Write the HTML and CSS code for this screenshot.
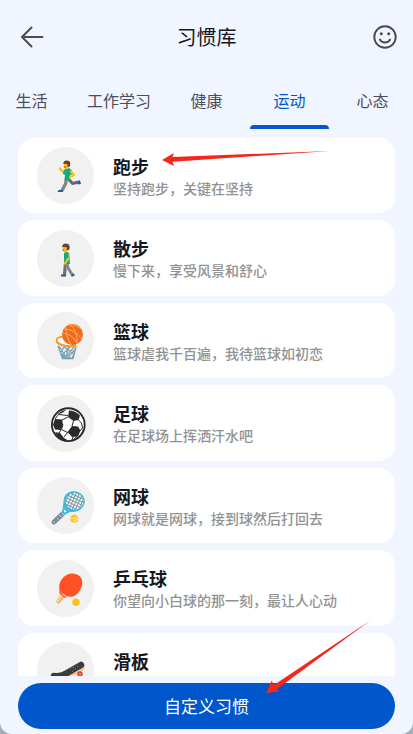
FILE: index.html
```html
<!DOCTYPE html>
<html lang="zh-CN">
<head>
<meta charset="utf-8">
<meta name="viewport" content="width=device-width, initial-scale=1">
<title>习惯库</title>
<link rel="stylesheet" href="styles.css">
</head>
<body>
<div class="app">
  <header class="topbar">
    <button class="icon-button icon-button-back" type="button" aria-label="返回">
      <svg width="24" height="24" viewBox="0 0 24 24" fill="none" stroke="#4d4d4d" stroke-width="2" stroke-linecap="round" stroke-linejoin="round"><path d="M22.500 12H2M11.500 2.500L2 12l9.500 9.500"/></svg>
    </button>
    <h1 class="title">习惯库</h1>
    <button class="icon-button" type="button" aria-label="表情">
      <svg width="24" height="24" viewBox="0 0 24 24"><circle cx="12" cy="12" r="10.700" fill="none" stroke="#4a4a4a" stroke-width="1.900"/><circle cx="8.300" cy="8.800" r="1.500" fill="#4a4a4a"/><circle cx="15.700" cy="8.800" r="1.500" fill="#4a4a4a"/><path d="M6.900 14.500c2 4 8.200 4 10.200 0" fill="none" stroke="#4a4a4a" stroke-width="1.800" stroke-linecap="round"/></svg>
    </button>
  </header>

  <nav class="tabs">
    <a class="tab" href="#life">生活</a>
    <a class="tab" href="#work">工作学习</a>
    <a class="tab" href="#health">健康</a>
    <a class="tab tab-active" href="#sport" aria-current="page">运动</a>
    <a class="tab" href="#mind">心态</a>
  </nav>

  <main class="content">
    <ul class="habits">
      <li class="habit">
        <svg class="avatar" viewBox="0 0 57 57" aria-hidden="true">
          <path d="M27 25l-3-2-1-1.500" fill="none" stroke="#fbc11c" stroke-width="2.400" stroke-linecap="round" stroke-linejoin="round"/>
          <path d="M31.500 32l4 4.500 6-1.500" fill="none" stroke="#686868" stroke-width="3" stroke-linejoin="round"/>
          <path d="M29.500 31.500l-1 5.500-3.500 6.500" fill="none" stroke="#858585" stroke-width="3.400" stroke-linejoin="round"/>
          <path d="M41 34.500l1.800-1.500 1.200 4-3.500.500zM21.500 43h4.500v2h-5.500z" fill="#2b55a5"/>
          <path d="M27.500 22.500q4-3 7 .5l1.500 4-3 1-.5 5.500-5-.5.500-5-2.500-1.500z" fill="#11aa82"/>
          <path d="M34 24.500l3 3.500-4 2" fill="none" stroke="#fbc11c" stroke-width="2.300" stroke-linecap="round" stroke-linejoin="round"/>
          <ellipse cx="29.500" cy="18.500" rx="2.900" ry="3.700" fill="#fbc11c"/>
          <path d="M26.200 16q1-3 5-2.300 3.300.8 1.500 5.800l-2.200.5v-3l-4.300-.2z" fill="#6b4030"/>
          <path d="M27 20h2" stroke="#6b4030" stroke-width=".8"/>
        </svg>
        <div class="habit-text"><h2 class="habit-name">跑步</h2><p class="habit-note">坚持跑步，关键在坚持</p></div>
        <svg class="pointer pointer-card" width="168" height="16" viewBox="0 0 168 16" aria-hidden="true"><path d="M0 9L12 2l-1.500 4L168 0 10.500 10.700 12 15z" fill="#f5261b"/></svg>
      </li>
      <li class="habit">
        <svg class="avatar" viewBox="0 0 57 57" aria-hidden="true">
          <path d="M28.500 33l-1 12" fill="none" stroke="#737373" stroke-width="3.200"/>
          <path d="M30 33l1 5 4.500 7" fill="none" stroke="#858585" stroke-width="3"/>
          <path d="M24 44.500h5v2h-5zM33.500 46l3-2.500 1.500 1.500-2.500 1.800z" fill="#2b55a5"/>
          <path d="M27 23q3-2 5.200.5l.8 10.500h-6z" fill="#11aa82"/>
          <path d="M30.500 25l.5 4-3 4.500" fill="none" stroke="#fbc11c" stroke-width="2.200" stroke-linecap="round"/>
          <path d="M29.500 24.500l.7 3.500" stroke="#11aa82" stroke-width="3"/>
          <ellipse cx="28.500" cy="18.500" rx="3" ry="3.700" fill="#fbc11c"/>
          <path d="M25.200 16q1-3 5-2.300 3.500.8 2 6l-2.500.5v-3l-4.500-.2z" fill="#6b4030"/>
          <path d="M25.500 20h2" stroke="#6b4030" stroke-width=".8"/>
        </svg>
        <div class="habit-text"><h2 class="habit-name">散步</h2><p class="habit-note">慢下来，享受风景和舒心</p></div>
      </li>
      <li class="habit">
        <svg class="avatar" viewBox="0 0 57 57" aria-hidden="true">
          <ellipse cx="29" cy="29.500" rx="9.500" ry="4.500" transform="rotate(10 29 29.500)" fill="#fafafa" stroke="#f79a30" stroke-width="1.800"/>
          <circle cx="35.500" cy="22.500" r="10.500" fill="#ed6b23"/>
          <path d="M27 17q10 0 18 10M33 12.500q8 7 7 19M26 21q9 1 14 10M31 13q8-1 14 5M28.500 15q0 8 5 17" fill="none" stroke="#ffad48" stroke-width="1"/>
          <path d="M19.500 30q5 5 20 4" fill="none" stroke="#f79a30" stroke-width="2"/>
          <path d="M21 34l4.500 12.500H36L39 35M22 34l8 12.500L38.500 37M27 35l-3.500 6 6 5.500 1-11M33 35l-8 8 2 3.500M37 35l-6.500 8 3.500 3.500M27 35l10 7-2 4" fill="none" stroke="#78a3b3" stroke-width="1.300"/>
        </svg>
        <div class="habit-text"><h2 class="habit-name">篮球</h2><p class="habit-note">篮球虐我千百遍，我待篮球如初恋</p></div>
      </li>
      <li class="habit">
        <svg class="avatar" viewBox="0 0 57 57" aria-hidden="true">
          <circle cx="31.300" cy="29.700" r="16.400" fill="#fff" stroke="#2b2b2b" stroke-width="1.900"/>
          <path d="M32 15.500q6 0 11 5l-1.500 4.500-5 1-5.500-4zM35 31l6 .5 2.500 4-2.500 6-6 .5-4.500-5zM18 24l7 .5 1 5-2 5.500-6-.5-2-5zM18 37l5 1 4 5 5 3q-10 0-14-9zM20 20q4-4.500 9-5l-3 2.500zM46.500 33l-1 5-2.500 3z" fill="#2b2b2b"/>
          <path d="M18 24l3.500-4.500L31 20.500M25 25l6-3M26 29.500l-1.500 5 6 3M36.500 26L35 31M41.500 25l3 3 1 5-2.500 3M24 35l-2 3M31 37l-4 5M36 42l-1 3M40 41.500l-4 3.500" fill="none" stroke="#2b2b2b" stroke-width="1"/>
        </svg>
        <div class="habit-text"><h2 class="habit-name">足球</h2><p class="habit-note">在足球场上挥洒汗水吧</p></div>
      </li>
      <li class="habit">
        <svg class="avatar" viewBox="0 0 57 57" aria-hidden="true">
          <defs><pattern id="strings" width="3" height="3" patternUnits="userSpaceOnUse" patternTransform="rotate(25)"><rect width="3" height="3" fill="#f7fafa"/><path d="M0 0h3M0 0v3" stroke="#7898a2" stroke-width="1.900"/></pattern></defs>
          <path d="M25.500 37L17 45" stroke="#78909c" stroke-width="5" stroke-linecap="round"/>
          <path d="M25 35l1.500 3M22.500 38l2 2M20 41l1.500 1.500M16.500 44.500l1 1" stroke="#dce6e9" stroke-width="1"/>
          <path d="M25 35.500L27 21C29 14 37 12.500 43 16c6 4 6 11 2 15-3 4-8 4-12 4l-5.500 3z" fill="#41b9e3"/>
          <path d="M28.500 25c0-6 6-11 12-8.500 8 3 7 12 2 15-4 2.500-13 1-14-6.500z" fill="url(#strings)"/>
          <path d="M27 32.500l3 2-3 1z" fill="#edf5f7"/>
          <circle cx="37.300" cy="41.700" r="4" fill="#fcc422"/><path d="M33.500 41q3 1.500 7-1M36 45q1-2 5-2.500" stroke="#fff0ae" fill="none"/>
        </svg>
        <div class="habit-text"><h2 class="habit-name">网球</h2><p class="habit-note">网球就是网球，接到球然后打回去</p></div>
      </li>
      <li class="habit">
        <svg class="avatar" viewBox="0 0 57 57" aria-hidden="true">
          <path d="M24 33l4 4-6.500 7-3-2z" fill="#f2b66d"/><path d="M24.500 35l-5 7.500" stroke="#ffdca8" stroke-width="1.500"/>
          <path d="M23 32c-2-7 0-12 5-16 5-4 12-3 15.500 1 3 4 2 10-1 14-3 5-8 7-13 5z" fill="#ff5126"/>
          <path d="M22.500 31q3 5 8 6l-3 .5-5-4z" fill="#e9442a"/>
          <circle cx="39" cy="42.300" r="3.700" fill="#f9c21c"/>
        </svg>
        <div class="habit-text"><h2 class="habit-name">乒乓球</h2><p class="habit-note">你望向小白球的那一刻，最让人心动</p></div>
      </li>
      <li class="habit">
        <svg class="avatar" viewBox="0 0 57 57" aria-hidden="true">
          <path d="M16 35q8 3 14-1l12-4 5-5" fill="none" stroke="#f3c18f" stroke-width="3"/>
          <path d="M17 34q8 1 13-3l14-8" fill="none" stroke="#3b3b3d" stroke-width="6.500" stroke-linecap="round" stroke-linejoin="round"/>
          <path d="M36 25.500h1M38 27h1M40 24.500h1M33 27h1M35 29h1" stroke="#85858a"/>
          <circle cx="43" cy="32" r="2.700" fill="#df4030"/><circle cx="43" cy="32" r="1" fill="#f5a28c"/><circle cx="27" cy="39" r="2.700" fill="#df4030"/>
        </svg>
        <div class="habit-text"><h2 class="habit-name">滑板</h2></div>
      </li>
    </ul>
  </main>

  <footer class="actions">
    <button class="primary" type="button">自定义习惯</button>
    <svg class="pointer pointer-action" width="106" height="74" viewBox="0 0 106 74" aria-hidden="true"><path d="M0 73L5.700 60.700 8 65 105 0 11 69l2.500 2.500z" fill="#f5261b"/></svg>
  </footer>
</div>
</body>
</html>
```
FILE: styles.css
```css
* {
  box-sizing: border-box;
}

body {
  margin: 0;
  background: #a9adb3;
  font-family: "Noto Sans CJK SC", sans-serif;
  color: #16181f;
}

h1, h2, p, ul {
  margin: 0;
  padding: 0;
}

.app {
  display: flex;
  flex-direction: column;
  height: 100vh;
  overflow: hidden;
  background: #f0f5ff;
  border-radius: 0 0 12px 12px;
}

.topbar {
  display: flex;
  align-items: center;
  justify-content: space-between;
  flex: none;
  height: 74px;
  padding: 0 12px;
}

.icon-button {
  display: flex;
  justify-content: center;
  width: 32px;
  padding: 0;
  border: 0;
  background: none;
}

.icon-button-back {
  justify-content: flex-end;
}

.title {
  font-size: 20px;
  font-weight: 400;
  line-height: 28px;
}

/* The strip is scrolled a little past its first tab. */
.tabs {
  display: flex;
  flex: none;
  height: 55px;
  margin-left: -10px;
  overflow: hidden;
}

.tab {
  position: relative;
  flex: none;
  min-width: 83px;
  padding: 0 14px;
  font-size: 16px;
  line-height: 52px;
  text-align: center;
  text-decoration: none;
  color: #4c4d5b;
}

.tab-active {
  color: #0558c9;
}

.tab-active::after {
  content: "";
  position: absolute;
  right: 2px;
  bottom: 0;
  left: 2px;
  height: 4px;
  border-radius: 4px 4px 0 0;
  background: #0558c9;
}

.content {
  flex: 1;
  min-height: 0;
  overflow: hidden;
  padding: 9px 18px 0;
}

.habits {
  display: flex;
  flex-direction: column;
  gap: 7px;
  list-style: none;
}

.habit {
  position: relative;
  display: flex;
  flex: none;
  align-items: center;
  gap: 19px;
  height: 75px;
  padding: 0 19px;
  border-radius: 16px;
  background: #fff;
}

.habit:nth-child(even) {
  height: 76px;
}

.avatar {
  flex: none;
  width: 57px;
  height: 57px;
  border-radius: 50%;
  background: #f1f1f1;
}

.habit-text {
  min-height: 44px;
}

.habit-name {
  font-size: 18px;
  font-weight: 700;
  line-height: 24px;
}

.habit-note {
  font-size: 14px;
  font-weight: 500;
  line-height: 20px;
  color: #929292;
}

.actions {
  position: relative;
  flex: none;
  padding: 7px 18px 5px;
}

.primary {
  display: block;
  width: 100%;
  height: 46px;
  padding: 0 0 2px;
  border: 0;
  border-radius: 23px;
  background: #0057cc;
  font-family: inherit;
  font-size: 17px;
  color: #fff;
}

.pointer {
  position: absolute;
  pointer-events: none;
}

.pointer-card {
  top: 13px;
  left: 144px;
}

.pointer-action {
  bottom: 40px;
  left: 266px;
}
```
